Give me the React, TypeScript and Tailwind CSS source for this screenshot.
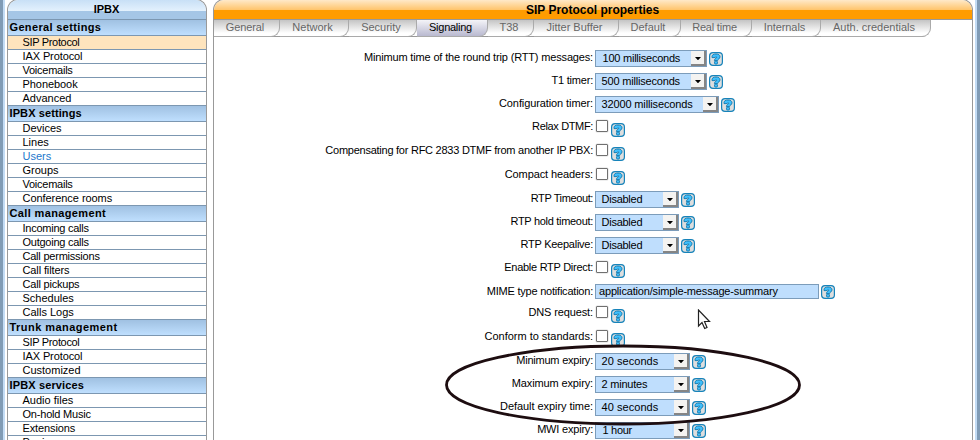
import React from "react";

type Item = { label: string; track?: string };
type Section = { title: string; track: string; items: Item[] };

const sections: Section[] = [
  {
    title: "General settings",
    track: "tracking-[0.35px]",
    items: [
      { label: "SIP Protocol", track: "tracking-[-0.33px]" },
      { label: "IAX Protocol", track: "tracking-[-0.1px]" },
      { label: "Voicemails", track: "tracking-[-0.25px]" },
      { label: "Phonebook", track: "tracking-[-0.06px]" },
      { label: "Advanced" },
    ],
  },
  {
    title: "IPBX settings",
    track: "tracking-[0.1px]",
    items: [
      { label: "Devices" },
      { label: "Lines" },
      { label: "Users" },
      { label: "Groups" },
      { label: "Voicemails", track: "tracking-[-0.25px]" },
      { label: "Conference rooms", track: "tracking-[-0.05px]" },
    ],
  },
  {
    title: "Call management",
    track: "tracking-[0.36px]",
    items: [
      { label: "Incoming calls", track: "tracking-[-0.25px]" },
      { label: "Outgoing calls", track: "tracking-[-0.25px]" },
      { label: "Call permissions", track: "tracking-[-0.22px]" },
      { label: "Call filters", track: "tracking-[-0.12px]" },
      { label: "Call pickups", track: "tracking-[-0.2px]" },
      { label: "Schedules" },
      { label: "Calls Logs" },
    ],
  },
  {
    title: "Trunk management",
    track: "tracking-[0.45px]",
    items: [
      { label: "SIP Protocol", track: "tracking-[-0.33px]" },
      { label: "IAX Protocol", track: "tracking-[-0.1px]" },
      { label: "Customized" },
    ],
  },
  {
    title: "IPBX services",
    track: "tracking-[0.13px]",
    items: [
      { label: "Audio files" },
      { label: "On-hold Music", track: "tracking-[-0.2px]" },
      { label: "Extensions", track: "tracking-[-0.12px]" },
      { label: "Paging" },
    ],
  },
];

const tabs: { label: string; width: string; track?: string }[] = [
  { label: "General", width: "w-[66px]", track: "tracking-[-0.1px]" },
  { label: "Network", width: "w-[69px]" },
  { label: "Security", width: "w-[68px]" },
  { label: "Signaling", width: "w-[71px]", track: "tracking-[-0.25px]" },
  { label: "T38", width: "w-[46px]" },
  { label: "Jitter Buffer", width: "w-[85px]" },
  { label: "Default", width: "w-[62px]" },
  { label: "Real time", width: "w-[71px]", track: "tracking-[-0.2px]" },
  { label: "Internals", width: "w-[69px]", track: "tracking-[-0.1px]" },
  { label: "Auth. credentials", width: "w-[110px]" },
];

type Row = {
  label: string;
  kind: "select" | "check" | "text";
  height: string;
  track: string;
  value?: string;
  width?: string;
  valueTrack?: string;
};

const rows: Row[] = [
  { label: "Minimum time of the round trip (RTT) messages:", kind: "select", value: "100 milliseconds", width: "w-[112px]", height: "h-[23px]", track: "tracking-[-0.16px]", valueTrack: "ml-px tracking-[-0.23px]" },
  { label: "T1 timer:", kind: "select", value: "500 milliseconds", width: "w-[112px]", height: "h-[23px]", track: "tracking-[-0.2px]", valueTrack: "tracking-[-0.18px]" },
  { label: "Configuration timer:", kind: "select", value: "32000 milliseconds", width: "w-[124px]", height: "h-[23px]", track: "tracking-[-0.1px]", valueTrack: "tracking-[-0.14px]" },
  { label: "Relax DTMF:", kind: "check", height: "h-[24px]", track: "tracking-[-0.35px]" },
  { label: "Compensating for RFC 2833 DTMF from another IP PBX:", kind: "check", height: "h-[24px]", track: "tracking-[-0.25px]" },
  { label: "Compact headers:", kind: "check", height: "h-[24px]", track: "tracking-[-0.1px]" },
  { label: "RTP Timeout:", kind: "select", value: "Disabled", width: "w-[84px]", height: "h-[23px]", track: "tracking-[-0.38px]", valueTrack: "tracking-[-0.25px]" },
  { label: "RTP hold timeout:", kind: "select", value: "Disabled", width: "w-[84px]", height: "h-[23px]", track: "tracking-[-0.3px]", valueTrack: "tracking-[-0.25px]" },
  { label: "RTP Keepalive:", kind: "select", value: "Disabled", width: "w-[84px]", height: "h-[23px]", track: "tracking-[-0.25px]", valueTrack: "tracking-[-0.25px]" },
  { label: "Enable RTP Direct:", kind: "check", height: "h-[24px]", track: "tracking-[-0.28px]" },
  { label: "MIME type notification:", kind: "text", value: "application/simple-message-summary", width: "w-[224px]", height: "h-[21px]", track: "tracking-[-0.22px]", valueTrack: "tracking-[-0.17px]" },
  { label: "DNS request:", kind: "check", height: "h-[24px]", track: "tracking-[-0.12px]" },
  { label: "Conform to standards:", kind: "check", height: "h-[24px]", track: "tracking-[-0.02px]" },
  { label: "Minimum expiry:", kind: "select", value: "20 seconds", width: "w-[95px]", height: "h-[23px]", track: "tracking-[-0.22px]", valueTrack: "tracking-[0.05px]" },
  { label: "Maximum expiry:", kind: "select", value: "2 minutes", width: "w-[95px]", height: "h-[23px]", track: "tracking-[-0.13px]", valueTrack: "tracking-[-0.22px]" },
  { label: "Default expiry time:", kind: "select", value: "40 seconds", width: "w-[95px]", height: "h-[23px]", track: "tracking-[-0.06px]", valueTrack: "tracking-[0.05px]" },
  { label: "MWI expiry:", kind: "select", value: "1 hour", width: "w-[95px]", height: "h-[23px]", track: "tracking-[-0.2px]", valueTrack: "ml-px tracking-[-0.3px]" },
];

function Help() {
  return (
    <svg width="14" height="14" viewBox="0 0 14 14" className="shrink-0">
      <rect x="0.6" y="0.6" width="12.8" height="12.8" rx="3.4" fill="#dedede" stroke="#1683ba" strokeWidth="1.2" />
      <path d="M3 5.6V4.600C3 2.800 4.700 2 7 2S11 2.900 11 4.800C11 6.900 8.600 7.100 8.600 8.600H5.400C5.400 6.400 7.800 6.100 7.800 5.200C7.800 4.700 6.200 4.600 6.100 5.600Z" fill="#3fbffc" stroke="#0b77ae" strokeWidth="0.9" />
      <rect x="5.500" y="9.200" width="3" height="2.800" rx="1" fill="#3fbffc" stroke="#0b77ae" strokeWidth="0.9" />
    </svg>
  );
}

function Select({ value, width, track }: { value?: string; width?: string; track?: string }) {
  return (
    <div className={`flex h-[17px] shrink-0 justify-between border border-[#7c9cba] bg-[#bfdefd] ${width}`}>
      <span className={`pl-[5.5px] text-[11px] leading-[15px] whitespace-nowrap ${track}`}>{value}</span>
      <span className="flex h-[15px] w-[15px] items-center justify-center border-r-2 border-b-2 border-[#858585] bg-[#f4f3f1]">
        <svg width="6" height="3" viewBox="0 0 6 3" className="mt-px">
          <path d="M0 0H6L3 3.300Z" fill="#000" />
        </svg>
      </span>
    </div>
  );
}

function FieldRow({ row }: { row: Row }) {
  return (
    <div className={`flex shrink-0 items-start ${row.height}`}>
      <div className={`w-[379px] shrink-0 text-right text-[11px] leading-[14px] whitespace-nowrap ${row.track}`}>{row.label}</div>
      <div className="ml-[2px] flex items-start">
        {row.kind === "select" && (
          <>
            <Select value={row.value} width={row.width} track={row.valueTrack} />
            <div className="mt-[2px] ml-[2px]"><Help /></div>
          </>
        )}
        {row.kind === "check" && (
          <>
            <div className="mt-px ml-px h-3 w-3 rounded-[1px] border border-[#707070] bg-white shadow-[0_0_0_0.5px_#ddd]" />
            <div className="mt-1 ml-[3px]"><Help /></div>
          </>
        )}
        {row.kind === "text" && (
          <>
            <div className={`h-[15px] border border-[#7c9cba] bg-[#bfdefd] pl-[3px] text-[11px] leading-[13px] ${row.width} ${row.valueTrack}`}>{row.value}</div>
            <div className="mt-px ml-[2px]"><Help /></div>
          </>
        )}
      </div>
    </div>
  );
}

function Sidebar() {
  return (
    <aside className="-mt-px h-[441px] w-[200px] shrink-0 overflow-hidden rounded-t-[11px] border-x border-t border-[#999] bg-white">
      <div className="flex h-5 items-center justify-center border-b border-[#7c97b1] bg-[linear-gradient(#c8e0f6_0,#e4f1fd_11px,#a5c6e6_11px,#a5c6e6_100%)] pr-px text-[11px] leading-none font-bold">
        IPBX
      </div>
      {sections.map((s, si) => (
        <div key={s.title}>
          <div className={`h-4 border-b border-[#7c97b1] bg-linear-to-b from-[#a0c1e2] to-[#bfdffe] pl-[1.5px] text-[11px] leading-[15px] font-bold ${s.track}`}>
            {s.title}
          </div>
          {s.items.map((item, i) => (
            <div
              key={item.label}
              className={`h-[14px] border-b border-[#7c97b1] pl-[14.5px] text-[11px] leading-[13px] ${item.track ?? ""} ${si === 0 && i === 0 ? "bg-[#fee4bd]" : ""} ${item.label === "Users" ? "text-[#2277cc]" : ""}`}
            >
              {item.label}
            </div>
          ))}
        </div>
      ))}
    </aside>
  );
}

function Tab({ label, width, track }: { label: string; width: string; track?: string }) {
  const active = label === "Signaling";
  return (
    <div
      className={`h-[17px] shrink-0 rounded-br-[9px] border-r border-b border-[#aaa] pr-[3px] text-center text-[11px] leading-[15px] whitespace-nowrap ${width} ${track ?? ""} ${
        active ? "bg-linear-to-b from-[#f4f4f8] to-[#b9b9d0] text-black" : "bg-[linear-gradient(#c4c4c4,#fff_13px)] text-[#666]"
      }`}
    >
      {label}
    </div>
  );
}

export default function App() {
  return (
    <div className="relative flex h-[440px] w-[980px] overflow-hidden bg-white font-['Liberation_Sans',Arial,sans-serif] text-black">
      <div className="w-[5px] shrink-0 border-r-2 border-[#c3dcf5] bg-[#809bb5]" />
      <div className="w-[2px] shrink-0" />
      <Sidebar />
      <main className="-mt-px ml-[6px] h-[441px] w-[760px] shrink-0 overflow-hidden rounded-t-[11px] border-x border-t border-[#999]">
        <div className="flex h-5 items-center justify-center border-b border-[#999] bg-[linear-gradient(#ffe9c8_0,#ffc46a_10px,#ff9c00_10px)] pr-px text-[12px] leading-none font-bold">
          SIP Protocol properties
        </div>
        <nav className="flex">
          <div className="flex rounded-br-[9px] bg-[linear-gradient(#c4c4c4,#fff_13px,#fff_16px,#999_16px)]">
            {tabs.map((t) => (
              <Tab key={t.label} {...t} />
            ))}
          </div>
        </nav>
        <div className="flex flex-col pt-[13px]">
          {rows.map((r) => (
            <FieldRow key={r.label} row={r} />
          ))}
        </div>
      </main>
      <div className="ml-[2px] w-[5px] shrink-0 border-l-2 border-[#c3dcf5] bg-[#809bb5]" />
      <svg className="absolute top-[340px] left-[440px]" width="370" height="90" viewBox="0 0 370 90">
        <ellipse cx="183" cy="45" rx="176.500" ry="39" fill="none" stroke="#1d0d10" strokeWidth="2.8" />
      </svg>
      <svg className="absolute top-[309px] left-[697px]" width="14" height="21" viewBox="0 0 14 21">
        <path d="M1.500 1V17L5 13.500L7.700 19.500L10 18.500L7.500 12.500H12.500Z" fill="#fff" stroke="#222" strokeWidth="1.200" />
      </svg>
    </div>
  );
}
